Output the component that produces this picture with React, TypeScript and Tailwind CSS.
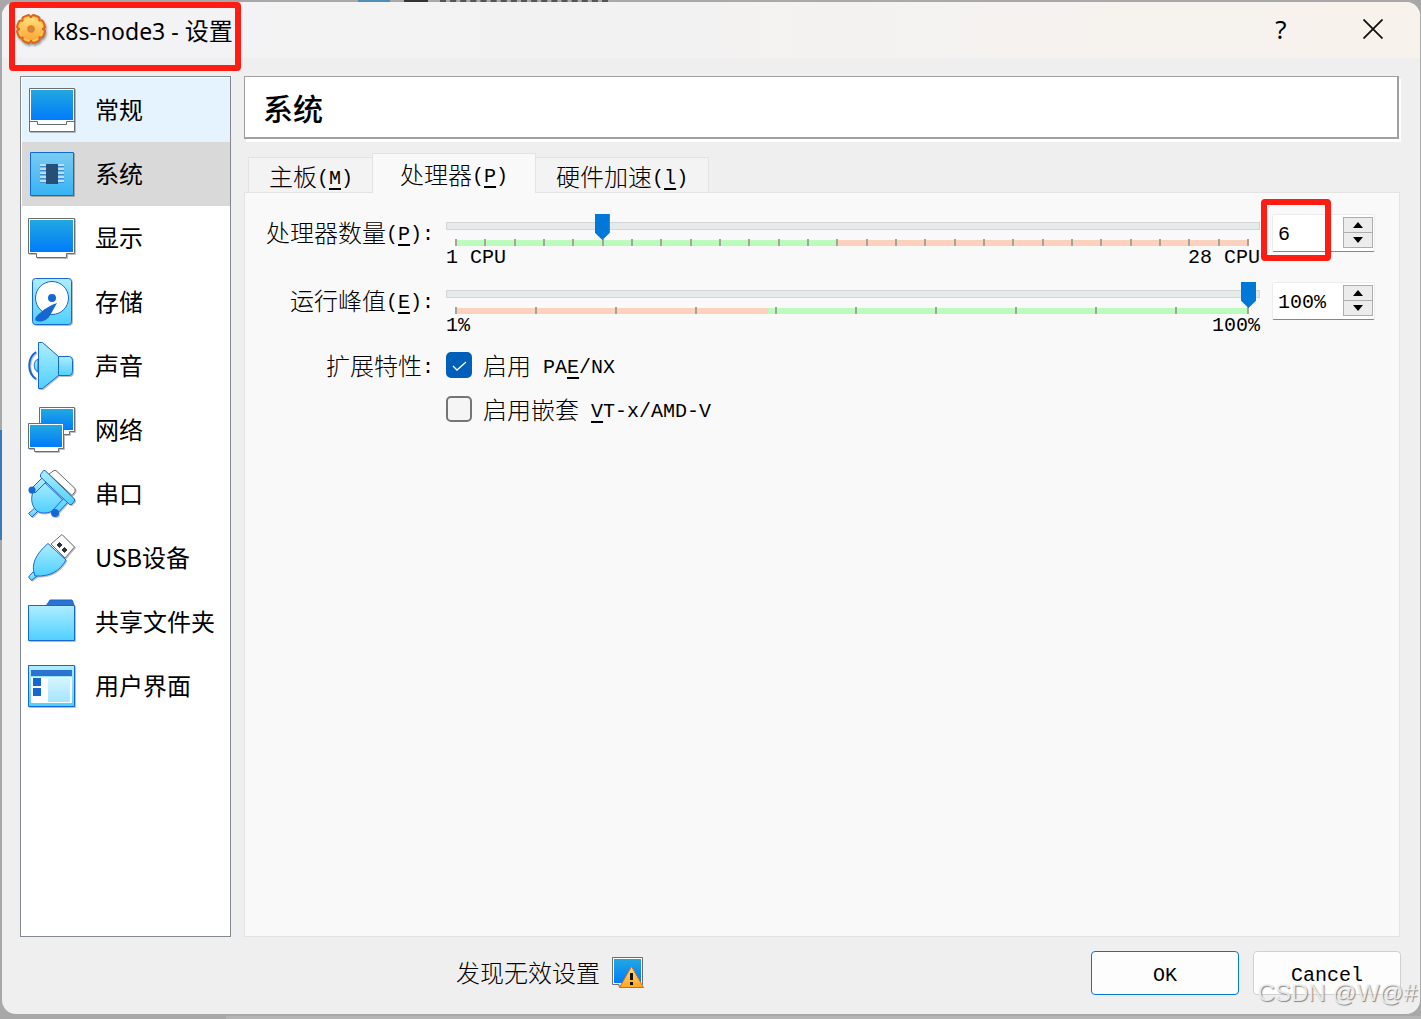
import React, { useState } from "react";

const BLUE = "#1767d2";

function Defs() {
  return (
    <svg width="0" height="0" className="absolute" aria-hidden="true">
      <defs>
        <linearGradient id="screen" x1="0" y1="0" x2="0" y2="1">
          <stop offset="0" stopColor="#21a8e0" />
          <stop offset="1" stopColor="#007bfb" />
        </linearGradient>
        <linearGradient id="cyan" x1="0" y1="0" x2="0" y2="1">
          <stop offset="0" stopColor="#aeeeff" />
          <stop offset="1" stopColor="#4fd0ff" />
        </linearGradient>
        <linearGradient id="board" x1="0" y1="0" x2="0" y2="1">
          <stop offset="0" stopColor="#7acbf2" />
          <stop offset="1" stopColor="#36b3f3" />
        </linearGradient>
        <linearGradient id="pale" x1="0" y1="0" x2="0" y2="1">
          <stop offset="0" stopColor="#d5f5ff" />
          <stop offset="1" stopColor="#a5e5fe" />
        </linearGradient>
        <linearGradient id="warn" x1="0" y1="0" x2="0" y2="1">
          <stop offset="0" stopColor="#ffe08a" />
          <stop offset="1" stopColor="#ffa51f" />
        </linearGradient>
        <linearGradient id="gear" gradientUnits="userSpaceOnUse" x1="0" y1="-13" x2="0" y2="13">
          <stop offset="0" stopColor="#ffe680" />
          <stop offset="1" stopColor="#ffa030" />
        </linearGradient>
      </defs>
    </svg>
  );
}

function Icon({ children }: { children: React.ReactNode }) {
  return (
    <svg viewBox="0 0 48 48" className="size-12 shrink-0 drop-shadow-[1px_1px_0px_#00000040]" aria-hidden="true">
      {children}
    </svg>
  );
}

const GeneralIcon = () => (
  <Icon>
    <path d="M1.5 2.5h45v43h-45z" fill="#fff" stroke="#6d6d6d" />
    <path d="M3 4h42v30H3z" fill="url(#screen)" />
    <path d="M1.5 35.5h8v3h29v-3h8" fill="#fff" stroke="#6d6d6d" />
  </Icon>
);

const SystemIcon = () => (
  <Icon>
    <path d="M2.5 2.5h43v43h-43z" fill="url(#board)" stroke="#0b6bd8" />
    {[14, 18, 22, 26, 30].map((y) => (
      <g key={y}>
        <path d={`M12 ${y}h24v2H12z`} fill="#b9def7" />
        <path d={`M12 ${y + 2}h24v1H12z`} fill="#3b8fd6" />
      </g>
    ))}
    <path d="M18 14h12v20H18z" fill="#274e75" />
  </Icon>
);

const DisplayIcon = () => (
  <Icon>
    <path d="M.5 4.5h46v35h-8v4h-30v-4h-8z" fill="#fff" stroke="#6d6d6d" />
    <path d="M2 6h43v32H2z" fill="url(#screen)" />
  </Icon>
);

const StorageIcon = () => (
  <Icon>
    <rect x="4.5" y=".5" width="39" height="46" rx="3" fill="url(#cyan)" stroke={BLUE} />
    <circle cx="24" cy="20" r="16.5" fill="#fff" stroke={BLUE} />
    <path d="M29 25c-9 3-17 9-21 14-2 3 0 4.500 3 4.500 5 0 8-2 11-6z" fill={BLUE} />
    <circle cx="24" cy="20" r="4" fill={BLUE} />
  </Icon>
);

const AudioIcon = () => (
  <Icon>
    <path d="M8 10C-1 16-1 31 8 37" fill="none" stroke={BLUE} strokeWidth="2" />
    <path d="M10 17c-5 2-5 11 0 13z" fill="url(#cyan)" stroke={BLUE} />
    <path d="M30.5 14.5h11q3 0 3 4v11q0 4-3 4h-11z" fill="url(#cyan)" stroke={BLUE} />
    <path d="M10.5.5h4l16 14v19l-16 13h-4z" fill="url(#cyan)" stroke={BLUE} />
  </Icon>
);

const NetworkIcon = () => (
  <Icon>
    <path d="M11.5 1.5h35v24h-5v3h-25v-3h-5z" fill="#fff" stroke="#6d6d6d" />
    <path d="M13 3h32v21H13z" fill="url(#screen)" />
    <path d="M.5 17.5h35v25h-5v3h-24v-3h-6z" fill="#fff" stroke="#6d6d6d" />
    <path d="M2 19h32v22H2z" fill="url(#screen)" />
  </Icon>
);

const SerialIcon = () => (
  <Icon>
    <path d="M21 4l5-3.500h2l19 18v3l-3 4z" fill="#fff" stroke="#6d6d6d" />
    <path d="M8 37l3 3-7 7-3.500-3.500z" fill="url(#cyan)" stroke={BLUE} />
    <path d="M14 10C3 19 1 31 7 39c5 7 19 5 30-7z" fill="url(#cyan)" stroke={BLUE} />
    <path d="M3 19L15 7l4 4L7 23zM25 40l11-12 4 4-11 12z" fill="url(#cyan)" stroke={BLUE} />
    <circle cx="4" cy="20" r="3.5" fill={BLUE} />
    <circle cx="27" cy="43" r="4" fill={BLUE} />
    <path d="M17 .5L46.500 29v2l-3 3.500h-2L12.500 7V4.500L15.500.5z" fill="url(#cyan)" stroke={BLUE} />
  </Icon>
);

const UsbIcon = () => (
  <Icon>
    <path d="M23 10L34 .5 46.5 13 37 24z" fill="#fff" stroke="#6d6d6d" />
    <path d="M29 11l2.500-2.500L34 11l-2.500 2.500zM34 16l2.500-2.500L39 16l-2.500 2.500z" fill="#333" stroke="#333" />
    <path d="M5 38l4 4-5.500 4.500-3-3.500z" fill="url(#cyan)" stroke={BLUE} />
    <path d="M20 9.500L38 26C32 37 22 43 7 42 2 30 9 19 20 9.500z" fill="url(#cyan)" stroke={BLUE} />
  </Icon>
);

const FolderIcon = () => (
  <Icon>
    <path d="M18 8l4-6h22l2 6z" fill="#2c72d0" stroke={BLUE} />
    <path d="M.5 7.5h46v35H.5z" fill="url(#cyan)" stroke={BLUE} />
  </Icon>
);

const InterfaceIcon = () => (
  <Icon>
    <path d="M.5 3.5h46v41H.5z" fill="url(#cyan)" stroke={BLUE} />
    <path d="M3 8h41v6H3z" fill="#2c72d0" />
    <path d="M3 15h41v26H3z" fill="#fff" />
    <path d="M5 16h8v8H5zM5 26h8v8H5z" fill={BLUE} />
    <path d="M20 16h22v24H20z" fill="url(#pale)" />
  </Icon>
);

const pages = [
  { name: "常规", icon: GeneralIcon },
  { name: "系统", icon: SystemIcon },
  { name: "显示", icon: DisplayIcon },
  { name: "存储", icon: StorageIcon },
  { name: "声音", icon: AudioIcon },
  { name: "网络", icon: NetworkIcon },
  { name: "串口", icon: SerialIcon },
  { name: "USB设备", icon: UsbIcon },
  { name: "共享文件夹", icon: FolderIcon },
  { name: "用户界面", icon: InterfaceIcon },
];

function Mono({ children }: { children: React.ReactNode }) {
  return (
    <span className="align-[2px] whitespace-pre font-['Liberation_Mono',monospace] text-xl leading-none">{children}</span>
  );
}

function Key({ children }: { children: React.ReactNode }) {
  return <span className="underline decoration-2 underline-offset-4">{children}</span>;
}

type SliderProps = {
  id: string;
  min: number;
  max: number;
  step: number;
  value: number;
  onChange: (v: number) => void;
  split: number;
  first: string;
  second: string;
  from: string;
  to: string;
};

function ScaleSlider({ id, min, max, step, value, onChange, split, first, second, from, to }: SliderProps) {
  const ticks: number[] = [];
  for (let v = min; v < max; v += step) ticks.push(v);
  ticks.push(max);
  const at = (v: number) => ((v - min) / (max - min)) * 100;
  return (
    <div className="h-17">
      <div className="relative h-6.5">
        <div className="absolute inset-x-0 top-2 h-2 border border-[#d3d6d6] bg-[#e7eaea]" />
        <input
          id={id}
          type="range"
          min={min}
          max={max}
          value={value}
          onChange={(e) => onChange(Number(e.target.value))}
          className="absolute inset-x-0.5 top-0 z-10 h-6.5 w-[calc(100%-6px)] appearance-none bg-transparent [&::-webkit-slider-thumb]:h-6.5 [&::-webkit-slider-thumb]:w-[15px] [&::-webkit-slider-thumb]:appearance-none [&::-webkit-slider-thumb]:bg-[#0078d7] [&::-webkit-slider-thumb]:[clip-path:polygon(0_0,100%_0,100%_72%,50%_100%,0_72%)]"
        />
      </div>
      <div className="relative mr-3 ml-2.5 flex h-1.5">
        <div className={first} style={{ width: `${at(split)}%` }} />
        <div className={second} />
        {ticks.map((v) => (
          <span key={v} className="absolute -top-px h-[7px] w-0.5 -translate-x-1/2 bg-[#a5a595]" style={{ left: `${at(v)}%` }} />
        ))}
      </div>
      <div className="flex justify-between pt-0.5">
        <Mono>{from}</Mono>
        <Mono>{to}</Mono>
      </div>
    </div>
  );
}

type SpinProps = { label: string; value: number; suffix: string; min: number; max: number; onChange: (v: number) => void };

function SpinBox({ label, value, suffix, min, max, onChange }: SpinProps) {
  const button =
    "flex h-4 w-full items-center justify-center border border-[#adadad] bg-[#ececec] first:h-[15px] first:border-b-0";
  return (
    <div className="flex h-[38px] items-center rounded-xs border border-[#ececec] border-b-[#868686] bg-white pr-px">
      <input
        aria-label={label}
        value={`${value}${suffix}`}
        onChange={(e) => onChange(Math.min(max, Math.max(min, parseInt(e.target.value) || min)))}
        className="w-0 grow bg-transparent pt-1 pl-[5px] font-['Liberation_Mono',monospace] text-xl outline-none"
      />
      <div className="mb-0.5 w-[30px]">
        <button aria-label={`${label} +`} className={button} onClick={() => onChange(Math.min(max, value + 1))}>
          <svg width="10" height="6" aria-hidden="true"><path d="M5 0l5 6H0z" /></svg>
        </button>
        <button aria-label={`${label} -`} className={button} onClick={() => onChange(Math.max(min, value - 1))}>
          <svg width="10" height="6" aria-hidden="true"><path d="M5 6L0 0h10z" /></svg>
        </button>
      </div>
    </div>
  );
}

function Check({ checked, onChange, children }: { checked: boolean; onChange: (v: boolean) => void; children: React.ReactNode }) {
  return (
    <label className="flex h-11 items-start gap-[11px]">
      <span className="relative flex">
        <input
          type="checkbox"
          checked={checked}
          onChange={(e) => onChange(e.target.checked)}
          className="size-[26px] appearance-none rounded-[5px] border-2 border-[#757575] bg-[#f5f5f5] checked:border-[#005fb8] checked:bg-[#005fb8]"
        />
        {checked && (
          <svg viewBox="0 0 26 26" className="pointer-events-none absolute inset-0" aria-hidden="true">
            <path d="M7 14l4 4 9-8" fill="none" stroke="#fff" strokeWidth="1.3" />
          </svg>
        )}
      </span>
      <span className="pt-px">{children}</span>
    </label>
  );
}

function Gear() {
  const angles = [22, 67, 112, 157];
  return (
    <svg viewBox="-16 -16 32 32" className="size-8 shrink-0 drop-shadow-[1px_2px_1px_#00000060]" aria-hidden="true">
      <g fill="#dc641b">
        {angles.map((a) => (
          <rect key={a} x="-5" y="-15" width="10" height="30" rx="3" transform={`rotate(${a})`} />
        ))}
        <circle r="12" />
      </g>
      <g fill="#ffc552">
        {angles.map((a) => (
          <rect key={a} x="-3.5" y="-13" width="7" height="26" rx="2" transform={`rotate(${a})`} />
        ))}
      </g>
      <circle r="11" fill="url(#gear)" />
      <circle r="3" fill="#c98a4b" stroke="#e87b23" strokeWidth="1.5" />
    </svg>
  );
}

export default function App() {
  const [page, setPage] = useState(1);
  const [tab, setTab] = useState(1);
  const [cpus, setCpus] = useState(6);
  const [cap, setCap] = useState(100);
  const [pae, setPae] = useState(true);
  const [nested, setNested] = useState(false);
  const tabs = [
    { name: "主板", key: "M" },
    { name: "处理器", key: "P" },
    { name: "硬件加速", key: "l" },
  ];

  return (
    <div className="relative flex min-h-screen flex-col bg-[#a8a8a8] pt-0.5 pr-px pb-[5px] pl-0.5 font-['Noto_Sans_CJK_SC',sans-serif] text-2xl/6 text-black">
      <Defs />
      <div className="absolute inset-x-0 top-0 flex h-1 pl-[358px]" aria-hidden="true">
        <div className="w-8 bg-[#4f8fb5]" />
        <div className="ml-3.5 w-6 bg-[#333]" />
        <div className="ml-3 w-42 border-t-2 border-dashed border-[#555]" />
      </div>
      <div className="absolute top-[430px] left-0 h-[110px] w-0.5 bg-[#3a7ab8]" aria-hidden="true" />
      <div className="absolute inset-x-0 bottom-0 h-[3px] pl-[226px]" aria-hidden="true">
        <div className="h-full bg-[#b5b5b5]" />
      </div>
      <div className="relative flex grow flex-col overflow-hidden rounded-[14px] bg-[#efefef]">
        <header className="flex h-14 items-start justify-between bg-linear-to-r from-[#f3f3f5] via-[#f3f2f2] to-[#f8f2ec] pl-[13px]">
          <div className="flex items-center gap-1.5 pt-2.5">
            <Gear />
            <h1 className="pt-1 leading-7 whitespace-nowrap">
              <span className="font-['Noto_Sans',sans-serif] text-[23px]">k8s-node3 - </span>设置
            </h1>
          </div>
          <div className="flex pr-px">
            <button aria-label="帮助" className="flex h-13.5 w-[92px] items-center justify-center font-['Noto_Sans',sans-serif] text-[26px]">?</button>
            <button aria-label="关闭" className="flex h-13.5 w-[92px] items-center justify-center">
              <svg width="20" height="20" viewBox="0 0 20 20" aria-hidden="true"><path d="M.5.5l19 19M19.5.5l-19 19" stroke="#111" strokeWidth="1.8" /></svg>
            </button>
          </div>
        </header>

        <div className="flex grow gap-[13px] pt-[18px] pr-[19px] pl-[18px]">
          <nav className="w-[211px] shrink-0 border border-[#828790] bg-white p-px pr-0">
            {pages.map(({ name, icon: PageIcon }, i) => (
              <button
                key={name}
                onClick={() => setPage(i)}
                className={`flex h-16 w-full items-center gap-[19px] pl-1.5 text-left whitespace-nowrap ${
                  i === page ? "bg-[#d9d9d9]" : i === 0 ? "bg-[#e5f3ff]" : "bg-white"
                }`}
              >
                <PageIcon />
                <span className="pb-0.5">{name}</span>
              </button>
            ))}
          </nav>

          <main className="flex grow flex-col">
            <h2 className="mr-0.5 flex h-[63px] items-center border border-r-2 border-b-2 border-[#a0a0a0] bg-white pl-[18px] text-[30px] font-medium shadow-[2px_3px_0_#fff]">
              {pages[page].name}
            </h2>
            <div role="tablist" className="relative z-10 mt-[14px] -mb-px flex items-end pl-1 font-light">
              {tabs.map((t, i) => (
                <button
                  key={t.key}
                  role="tab"
                  aria-selected={tab === i}
                  onClick={() => setTab(i)}
                  className={
                    tab === i
                      ? "-ml-px h-10 border border-b-0 border-[#e3e3e3] bg-[#f9f9f9] px-[27px] pt-0.5"
                      : "h-9 border-y border-[#e3e3e3] bg-[#f3f3f3] px-5 pt-0.5 first:border-l last:border-r"
                  }
                >
                  {t.name}
                  <Mono>(<Key>{t.key}</Key>)</Mono>
                </button>
              ))}
            </div>
            <section className="mr-px grid grow grid-cols-[168px_1fr_103px] content-start gap-x-3 border border-[#e3e3e3] bg-[#f9f9f9] pt-[21px] pr-6 pl-[21px] font-light">
              <label htmlFor="cpus" className="pt-1.5 text-right whitespace-nowrap">
                处理器数量<Mono>(<Key>P</Key>):</Mono>
              </label>
              <ScaleSlider id="cpus" min={1} max={28} step={1} value={cpus} onChange={setCpus} split={14} first="bg-[#bdfabd]" second="grow bg-[#fcd1bd]" from="1 CPU" to="28 CPU" />
              <div className="relative">
                <SpinBox label="处理器数量" value={cpus} suffix="" min={1} max={28} onChange={setCpus} />
                <div className="pointer-events-none absolute -top-[15px] -left-[11px] h-[62px] w-[70px] rounded-[4px] border-6 border-[#ff1d13]" />
              </div>

              <label htmlFor="cap" className="pt-1.5 text-right whitespace-nowrap">
                运行峰值<Mono>(<Key>E</Key>):</Mono>
              </label>
              <ScaleSlider id="cap" min={1} max={100} step={10} value={cap} onChange={setCap} split={40} first="bg-[#fcd1bd]" second="grow bg-[#bdfabd]" from="1%" to="100%" />
              <SpinBox label="运行峰值" value={cap} suffix="%" min={1} max={100} onChange={setCap} />

              <div className="pt-[3px] text-right whitespace-nowrap">扩展特性<Mono>:</Mono></div>
              <div className="col-span-2 pt-0.5">
                <Check checked={pae} onChange={setPae}>启用<Mono> PA<Key>E</Key>/NX</Mono></Check>
                <Check checked={nested} onChange={setNested}>启用嵌套<Mono> <Key>V</Key>T-x/AMD-V</Mono></Check>
              </div>
            </section>
          </main>
        </div>

        <footer className="flex h-[77px] shrink-0 items-center pr-[19px] pb-[5px] pl-[454px]">
          <span className="pb-0.5 font-light whitespace-nowrap">发现无效设置</span>
          <svg viewBox="0 0 32 32" className="ml-3 size-8 shrink-0" aria-hidden="true">
            <path d="M.5.5h30v27H10l-3 2v-2H.5z" fill="#fff" stroke="#6d6d6d" />
            <path d="M2 2h27v24H2z" fill="url(#screen)" />
            <path d="M19.5 9.5L31.5 30.5h-24z" fill="url(#warn)" stroke="#d8691b" strokeLinejoin="round" />
            <path d="M18 16h3v7h-3zM18 25h3v3h-3z" fill="#111" />
          </svg>
          <div className="ml-auto flex gap-3.5">
            <button className="h-11 w-[148px] rounded-[4px] border border-[#0078d4] bg-[#fdfdfd]"><Mono>OK</Mono></button>
            <button className="h-11 w-[148px] rounded-[4px] border border-[#d0d0d0] bg-[#fdfdfd]"><Mono>Cancel</Mono></button>
          </div>
        </footer>
      </div>
      <div className="pointer-events-none absolute top-0.5 left-[9px] h-[69px] w-[232px] rounded-[4px] border-6 border-[#ff1d13]" />
      <span className="pointer-events-none absolute right-1 bottom-3 font-['Liberation_Sans',sans-serif] text-2xl/7 text-[#f2f2f2e0] [text-shadow:1px_1px_1px_#888]">CSDN @W@#</span>
    </div>
  );
}
